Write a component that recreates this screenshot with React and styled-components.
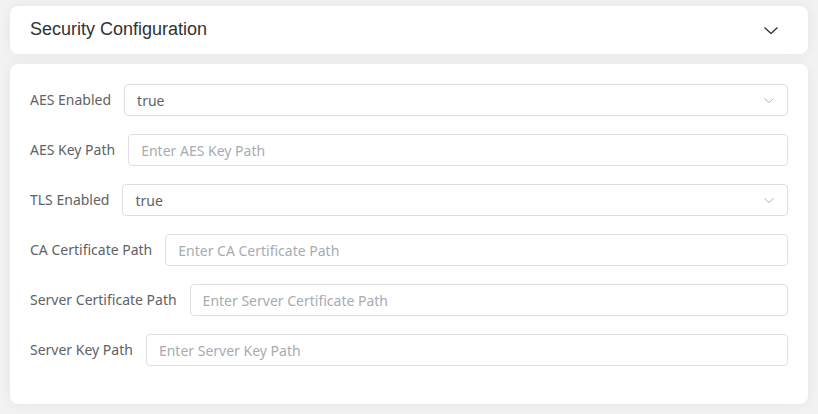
import React from "react";
import styled, { createGlobalStyle } from "styled-components";

const Global = createGlobalStyle`
  html, body { margin: 0; padding: 0; background: #f2f2f2; }
  body { font-family: "Noto Sans", "Liberation Sans", sans-serif; }
  * { box-sizing: border-box; }
`;

const Page = styled.div`
  padding: 6px 10px 10px 10px;
  display: flex;
  flex-direction: column;
  gap: 10px;
`;

const Card = styled.div`
  background: #fff;
  border-radius: 8px;
  box-shadow: 0 0 12px rgba(0, 0, 0, 0.06);
`;

const Header = styled(Card)`
  height: 48px;
  display: flex;
  align-items: center;
  justify-content: space-between;
  padding: 0 30px 0 20px;
`;

const Title = styled.div`
  font-family: "Liberation Sans", Arial, sans-serif;
  font-size: 18px;
  color: #303133;
  margin-bottom: 2px;
`;

const Body = styled(Card)`
  padding: 20px 20px 38px 20px;
  display: flex;
  flex-direction: column;
  gap: 18px;
`;

const Row = styled.div`
  display: flex;
  align-items: center;
  height: 32px;
`;

const Label = styled.label`
  font-size: 14px;
  color: #606266;
  padding-right: 13px;
  white-space: nowrap;
  line-height: 32px;
`;

const Field = styled.div`
  flex: 1;
  height: 32px;
  border: 1px solid #dcdfe6;
  border-radius: 4px;
  display: flex;
  align-items: center;
  justify-content: space-between;
  padding: 0 13px 0 12px;
  font-size: 14px;
  color: ${(p) => (p.$placeholder ? "#a8abb2" : "#606266")};
`;

const Chevron = ({ w, h, color, sw }) => (
  <svg width={w} height={h} viewBox={`0 0 ${w} ${h}`} fill="none">
    <polyline
      points={`0.5,0.5 ${w / 2},${h - 0.5} ${w - 0.5},0.5`}
      stroke={color}
      strokeWidth={sw}
    />
  </svg>
);

const rows = [
  { label: "AES Enabled", value: "true", select: true },
  { label: "AES Key Path", placeholder: "Enter AES Key Path" },
  { label: "TLS Enabled", value: "true", select: true },
  { label: "CA Certificate Path", placeholder: "Enter CA Certificate Path" },
  { label: "Server Certificate Path", placeholder: "Enter Server Certificate Path" },
  { label: "Server Key Path", placeholder: "Enter Server Key Path" },
];

export default function App() {
  return (
    <>
      <Global />
      <Page>
        <Header>
          <Title>Security Configuration</Title>
          <Chevron w={14} h={7} color="#303133" sw={1.3} />
        </Header>
        <Body>
          {rows.map((r) => (
            <Row key={r.label}>
              <Label>{r.label}</Label>
              <Field $placeholder={!r.select}>
                <span>{r.select ? r.value : r.placeholder}</span>
                {r.select && <Chevron w={10} h={5} color="#b0b3b9" sw={1} />}
              </Field>
            </Row>
          ))}
        </Body>
      </Page>
    </>
  );
}
